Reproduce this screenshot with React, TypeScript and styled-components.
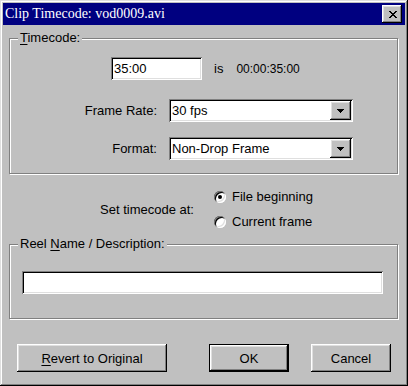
import styled, { createGlobalStyle } from "styled-components";

const GlobalStyle = createGlobalStyle`
  html, body {
    margin: 0;
    padding: 0;
    background: #c0c0c0;
  }
  body {
    font-family: "Liberation Sans", Arial, sans-serif;
    font-size: 13px;
    color: #000;
  }
  * { box-sizing: border-box; }
`;

const raised = `box-shadow: inset -1px -1px #000, inset 1px 1px #fff, inset -2px -2px #808080, inset 2px 2px #dfdfdf;`;
const sunken = `box-shadow: inset 1px 1px #808080, inset -1px -1px #fff, inset 2px 2px #000, inset -2px -2px #dfdfdf;`;

const Window = styled.div`
  width: 408px;
  height: 386px;
  padding: 3px;
  background: #c0c0c0;
  box-shadow: inset -1px -1px #000, inset 1px 1px #dfdfdf, inset -2px -2px #808080, inset 2px 2px #fff;
  display: flex;
  flex-direction: column;
`;

const TitleBar = styled.div`
  height: 22px;
  background: #000080;
  color: #fff;
  display: flex;
  align-items: center;
  justify-content: space-between;
  padding-left: 2px;
  font-family: "Liberation Serif", "Times New Roman", serif;
  font-size: 14px;
`;

const CloseButton = styled.div`
  width: 20px;
  height: 18px;
  margin-right: 3px;
  background: #c0c0c0;
  ${raised}
  display: flex;
  align-items: center;
  justify-content: center;
`;

const Body = styled.div`
  display: flex;
  flex-direction: column;
  padding: 0 7px 0 6px;
`;

const Group = styled.fieldset<{ $top: number }>`
  margin: ${(p) => p.$top}px 0 0 0;
  padding: 0;
  min-width: 0;
  border: 1px solid #808080;
  box-shadow: inset 1px 1px #fff, 1px 1px #fff;
`;

const Legend = styled.legend`
  margin-left: 8px;
  padding: 0 2px;
  height: 14px;
  line-height: 14px;
  background: #c0c0c0;
`;

const U = styled.span`
  text-decoration: underline;
  text-underline-offset: 2px;
`;

const EditRow = styled.div`
  display: flex;
  align-items: center;
  margin-top: 12px;
  padding-left: 101px;
`;

const TextBox = styled.div<{ $width: number }>`
  width: ${(p) => p.$width}px;
  height: 23px;
  background: #fff;
  ${sunken}
  display: flex;
  align-items: center;
  padding: 0 3px;
`;

const Plain = styled.span<{ $gap: number; $small?: boolean }>`
  margin-left: ${(p) => p.$gap}px;
  font-size: ${(p) => (p.$small ? 12 : 13)}px;
`;

const FieldRow = styled.div<{ $top: number }>`
  display: grid;
  grid-template-columns: 147px 184px;
  column-gap: 12px;
  align-items: center;
  margin-top: ${(p) => p.$top}px;
`;

const Label = styled.span`
  text-align: right;
`;

const Select = styled.div`
  height: 23px;
  background: #fff;
  ${sunken}
  display: flex;
  align-items: stretch;
  padding: 2px;
`;

const SelectValue = styled.span`
  flex: 1;
  display: flex;
  align-items: center;
  padding-left: 1px;
`;

const ArrowButton = styled.span`
  width: 21px;
  background: #c0c0c0;
  ${raised}
  display: flex;
  align-items: center;
  justify-content: center;
`;

const RadioSection = styled.div`
  display: flex;
  align-items: center;
  margin-top: 10px;
`;

const RadioCaption = styled.span`
  width: 185px;
  text-align: right;
`;

const RadioList = styled.div`
  display: flex;
  flex-direction: column;
  margin-left: 20px;
`;

const RadioOption = styled.div`
  height: 25px;
  display: flex;
  align-items: center;
  gap: 6px;
`;

const RadioDot = styled.span<{ $checked?: boolean }>`
  width: 12px;
  height: 12px;
  border-radius: 50%;
  background: #fff;
  box-shadow: inset 1px 1px #808080, inset -1px -1px #fff, inset 2px 2px #000, inset -2px -2px #dfdfdf;
  display: flex;
  align-items: center;
  justify-content: center;
  &::after {
    content: "";
    width: 4px;
    height: 4px;
    border-radius: 50%;
    background: ${(p) => (p.$checked ? "#000" : "transparent")};
  }
`;

const ReelBox = styled.div`
  padding: 20px 0 24px 12px;
`;

const ButtonRow = styled.div`
  display: flex;
  margin-top: 25px;
  padding-left: 8px;
`;

const Button = styled.div<{ $width: number; $gap: number; $default?: boolean }>`
  width: ${(p) => p.$width}px;
  height: 28px;
  margin-left: ${(p) => p.$gap}px;
  display: flex;
  align-items: center;
  justify-content: center;
  background: #c0c0c0;
  ${(p) =>
    p.$default
      ? `border: 1px solid #000; box-shadow: inset -1px -1px #000, inset 1px 1px #fff, inset -2px -2px #808080, inset 2px 2px #dfdfdf;`
      : raised}
`;

// pixel pattern of the classic close glyph
const closeRows = [
  [0, 2, 7, 2],
  [1, 2, 6, 2],
  [2, 4],
  [3, 2],
  [2, 4],
  [1, 2, 6, 2],
  [0, 2, 7, 2],
];

const CloseIcon = () => (
  <svg width="9" height="7" viewBox="0 0 9 7" shapeRendering="crispEdges">
    {closeRows.map((r, y) => (
      <g key={y}>
        <rect x={r[0] + 0.5} y={y} width={r[1]} height={1} fill="#000" />
        {r.length > 2 && <rect x={r[2] - 0.5} y={y} width={r[3]} height={1} fill="#000" />}
      </g>
    ))}
  </svg>
);

const Arrow = () => (
  <svg width="7" height="4" viewBox="0 0 7 4" shapeRendering="crispEdges">
    <rect x="0" y="0" width="7" height="1" fill="#000" />
    <rect x="1" y="1" width="5" height="1" fill="#000" />
    <rect x="2" y="2" width="3" height="1" fill="#000" />
    <rect x="3" y="3" width="1" height="1" fill="#000" />
  </svg>
);

export default function App() {
  return (
    <>
      <GlobalStyle />
      <Window>
        <TitleBar>
          <span>Clip Timecode: vod0009.avi</span>
          <CloseButton>
            <CloseIcon />
          </CloseButton>
        </TitleBar>
        <Body>
          <Group $top={6}>
            <Legend>
              <U>T</U>imecode:
            </Legend>
            <EditRow>
              <TextBox $width={91}>35:00</TextBox>
              <Plain $gap={12}>is</Plain>
              <Plain $gap={13} $small>
                00:00:35:00
              </Plain>
            </EditRow>
            <FieldRow $top={19}>
              <Label>Frame Rate:</Label>
              <Select>
                <SelectValue>30 fps</SelectValue>
                <ArrowButton>
                  <Arrow />
                </ArrowButton>
              </Select>
            </FieldRow>
            <FieldRow $top={15}>
              <Label>Format:</Label>
              <Select>
                <SelectValue>Non-Drop Frame</SelectValue>
                <ArrowButton>
                  <Arrow />
                </ArrowButton>
              </Select>
            </FieldRow>
            <div style={{ height: 13 }} />
          </Group>

          <RadioSection>
            <RadioCaption>Set timecode at:</RadioCaption>
            <RadioList>
              <RadioOption>
                <RadioDot $checked />
                File beginning
              </RadioOption>
              <RadioOption>
                <RadioDot />
                Current frame
              </RadioOption>
            </RadioList>
          </RadioSection>

          <Group $top={3}>
            <Legend>
              Reel <U>N</U>ame / Description:
            </Legend>
            <ReelBox>
              <TextBox $width={361} />
            </ReelBox>
          </Group>

          <ButtonRow>
            <Button $width={150} $gap={0}>
              <span>
                <U>R</U>evert to Original
              </span>
            </Button>
            <Button $width={80} $gap={42} $default>
              OK
            </Button>
            <Button $width={80} $gap={22}>
              Cancel
            </Button>
          </ButtonRow>
        </Body>
      </Window>
    </>
  );
}
